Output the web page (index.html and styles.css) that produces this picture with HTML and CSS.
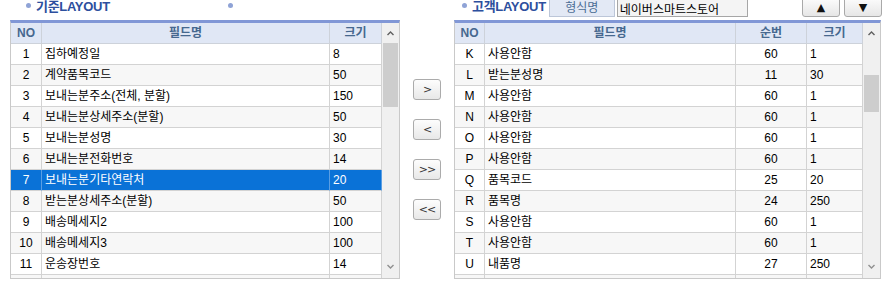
FILE: index.html
```html
<!DOCTYPE html>
<html lang="ko">
  <head>
    <meta charset="UTF-8" />
    <meta name="viewport" content="width=device-width, initial-scale=1.0" />
    <title>LAYOUT 설정</title>
    <link rel="stylesheet" href="styles.css">
  </head>
  <body>
    <div class="page">
      <!-- 기준 LAYOUT -->
      <section class="panel panel-left">
        <div class="panel-head head-left">
          <span class="title">기준LAYOUT</span>
          <span class="title"></span>
        </div>
        <div class="grid">
          <div class="grid-view">
            <table>
              <thead>
                <tr>
                  <th class="c-no">NO</th>
                  <th class="c-name">필드명</th>
                  <th>크기</th>
                </tr>
              </thead>
              <tbody>
                <tr><td class="center">1</td><td>집하예정일</td><td>8</td></tr>
                <tr><td class="center">2</td><td>계약품목코드</td><td>50</td></tr>
                <tr><td class="center">3</td><td>보내는분주소(전체, 분할)</td><td>150</td></tr>
                <tr><td class="center">4</td><td>보내는분상세주소(분할)</td><td>50</td></tr>
                <tr><td class="center">5</td><td>보내는분성명</td><td>30</td></tr>
                <tr><td class="center">6</td><td>보내는분전화번호</td><td>14</td></tr>
                <tr class="selected"><td class="center">7</td><td>보내는분기타연락처</td><td>20</td></tr>
                <tr><td class="center">8</td><td>받는분상세주소(분할)</td><td>50</td></tr>
                <tr><td class="center">9</td><td>배송메세지2</td><td>100</td></tr>
                <tr><td class="center">10</td><td>배송메세지3</td><td>100</td></tr>
                <tr><td class="center">11</td><td>운송장번호</td><td>14</td></tr>
                <tr><td></td><td></td><td></td></tr>
              </tbody>
            </table>
          </div>
          <div class="vscroll">
            <div class="sb-btn">
              <svg width="7" height="5" viewBox="0 0 7 5"><polyline points="0.5,4 3.5,1 6.5,4" fill="none" stroke="#606060" stroke-width="1.4"/></svg>
            </div>
            <div class="sb-thumb thumb-left"></div>
            <div class="sb-btn sb-down">
              <svg width="7" height="5" viewBox="0 0 7 5"><polyline points="0.5,1 3.5,4 6.5,1" fill="none" stroke="#909090" stroke-width="1.4"/></svg>
            </div>
          </div>
        </div>
      </section>

      <!-- 이동 버튼 -->
      <div class="move-buttons">
        <button class="move-btn">&gt;</button>
        <button class="move-btn">&lt;</button>
        <button class="move-btn">&gt;&gt;</button>
        <button class="move-btn">&lt;&lt;</button>
      </div>

      <!-- 고객 LAYOUT -->
      <section class="panel panel-right">
        <div class="panel-head head-right">
          <span class="title">고객LAYOUT</span>
          <span class="form-label">형식명</span>
          <input class="form-input" type="text" value="네이버스마트스토어" />
          <div class="order-buttons">
            <button class="order-btn">&#9650;</button>
            <button class="order-btn">&#9660;</button>
          </div>
        </div>
        <div class="grid">
          <div class="grid-view">
            <table>
              <thead>
                <tr>
                  <th class="r-no">NO</th>
                  <th class="r-name">필드명</th>
                  <th class="r-seq">순번</th>
                  <th>크기</th>
                </tr>
              </thead>
              <tbody>
                <tr><td class="center">K</td><td>사용안함</td><td class="center">60</td><td>1</td></tr>
                <tr><td class="center">L</td><td>받는분성명</td><td class="center">11</td><td>30</td></tr>
                <tr><td class="center">M</td><td>사용안함</td><td class="center">60</td><td>1</td></tr>
                <tr><td class="center">N</td><td>사용안함</td><td class="center">60</td><td>1</td></tr>
                <tr><td class="center">O</td><td>사용안함</td><td class="center">60</td><td>1</td></tr>
                <tr><td class="center">P</td><td>사용안함</td><td class="center">60</td><td>1</td></tr>
                <tr><td class="center">Q</td><td>품목코드</td><td class="center">25</td><td>20</td></tr>
                <tr><td class="center">R</td><td>품목명</td><td class="center">24</td><td>250</td></tr>
                <tr><td class="center">S</td><td>사용안함</td><td class="center">60</td><td>1</td></tr>
                <tr><td class="center">T</td><td>사용안함</td><td class="center">60</td><td>1</td></tr>
                <tr><td class="center">U</td><td>내품명</td><td class="center">27</td><td>250</td></tr>
                <tr><td></td><td></td><td></td><td></td></tr>
              </tbody>
            </table>
          </div>
          <div class="vscroll">
            <div class="sb-btn">
              <svg width="7" height="5" viewBox="0 0 7 5"><polyline points="0.5,4 3.5,1 6.5,4" fill="none" stroke="#606060" stroke-width="1.4"/></svg>
            </div>
            <div class="sb-thumb thumb-right"></div>
            <div class="sb-btn sb-down">
              <svg width="7" height="5" viewBox="0 0 7 5"><polyline points="0.5,1 3.5,4 6.5,1" fill="none" stroke="#909090" stroke-width="1.4"/></svg>
            </div>
          </div>
        </div>
      </section>
    </div>
  </body>
</html>
```

FILE: styles.css
```css
body {
  margin: 0;
  padding: 0;
  background: #fff;
  font-family: "Liberation Sans", "Noto Sans CJK KR", sans-serif;
  font-size: 12px;
  color: #000;
  overflow: hidden;
}

.page {
  display: flex;
  align-items: flex-start;
  padding-left: 10px;
  margin-top: -5px;
}

.panel-left {
  width: 390px;
}

.panel-right {
  width: 427px;
}

/* panel title row */
.panel-head {
  height: 25px;
}

.head-left {
  display: grid;
  grid-template-columns: 202px 1fr;
  padding-left: 16px;
}

.head-right {
  display: flex;
  align-items: flex-start;
  padding-left: 8px;
}

.title {
  display: flex;
  align-items: center;
  height: 21px;
  font-size: 13px;
  font-weight: bold;
  color: #2d4f9e;
  letter-spacing: -0.3px;
}

.title::before {
  content: "";
  width: 5px;
  height: 5px;
  border-radius: 50%;
  background: #8fa3d6;
  margin-right: 5px;
}

.form-label {
  margin-left: 3px;
  width: 64px;
  height: 20px;
  line-height: 24px;
  text-align: center;
  background: #e3e9f5;
  border: 1px solid #bcc6d8;
  color: #4b6d94;
  font-size: 12px;
}

.form-input {
  margin: 0 0 0 2px;
  width: 131px;
  height: 22px;
  box-sizing: border-box;
  padding: 5px 2px 0;
  border: 1px solid #a6a6a6;
  background: #f4f4f4;
  font-family: "Liberation Sans", "Noto Sans CJK KR", sans-serif;
  font-size: 12px;
  color: #000;
}

.order-buttons {
  display: flex;
  gap: 4px;
  margin-left: auto;
  margin-right: -1px;
}

.order-btn {
  width: 38px;
  height: 22px;
  padding: 4px 0 0;
  border: 1px solid #a9a9a9;
  border-radius: 3px;
  background: linear-gradient(#ffffff, #e6e6e6);
  font-family: "DejaVu Sans", sans-serif;
  font-size: 11px;
  color: #111;
  line-height: 14px;
}

/* grid */
.grid {
  display: flex;
  border-top: 3px solid #8197d6;
  border-left: 1px solid #c9c9c9;
  border-right: 1px solid #c9c9c9;
  border-bottom: 1px solid #c9c9c9;
}

.grid-view {
  flex: 1;
  height: 255px;
  overflow: hidden;
}

table {
  width: 100%;
  table-layout: fixed;
  border-collapse: separate;
  border-spacing: 0;
}

th,
td {
  box-sizing: border-box;
  height: 21px;
  padding: 0 3px;
  line-height: 20px;
  border-right: 1px solid #d3d3d3;
  border-bottom: 1px solid #d3d3d3;
  white-space: nowrap;
  overflow: hidden;
  text-align: left;
  font-weight: normal;
}

th {
  background: #e0e7f5;
  color: #46688f;
  font-weight: bold;
  text-align: center;
  border-right-color: #cdd2da;
  border-bottom-color: #cdd2da;
}

tbody tr:nth-child(even) td {
  background: #f7f7f7;
}

tbody tr.selected td {
  background: #0a72d7;
  color: #fff;
  border-right-color: #5a9ee3;
}

.center {
  text-align: center;
}

.c-no {
  width: 31px;
}

.c-name {
  width: 288px;
}

.r-no {
  width: 30px;
}

.r-name {
  width: 251px;
}

.r-seq {
  width: 71px;
}

/* scrollbar */
.vscroll {
  width: 17px;
  height: 255px;
  display: flex;
  flex-direction: column;
  background: #f0f0f0;
}

.sb-btn {
  height: 20px;
  display: flex;
  align-items: center;
  justify-content: center;
}

.sb-down {
  margin-top: auto;
  height: 24px;
}

.sb-thumb {
  margin: 0 1px;
  background: #cdcdcd;
}

.thumb-left {
  height: 64px;
}

.thumb-right {
  margin-top: 32px;
  height: 37px;
}

/* move buttons */
.move-buttons {
  width: 54px;
  display: flex;
  flex-direction: column;
  align-items: center;
  gap: 19px;
  padding-top: 84px;
}

.move-btn {
  width: 28px;
  height: 21px;
  padding: 0;
  border: 1px solid #ababab;
  border-radius: 3px;
  background: linear-gradient(#fdfdfd, #e8e8e8);
  font-family: "DejaVu Sans", sans-serif;
  font-size: 11px;
  color: #333;
  letter-spacing: -1px;
}
```
